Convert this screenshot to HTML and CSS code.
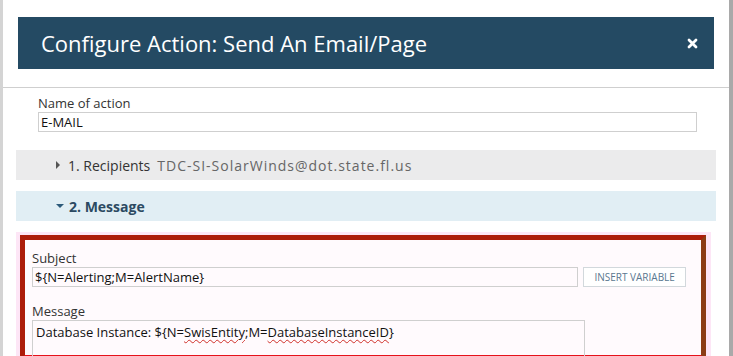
FILE: index.html
```html
<!DOCTYPE html>
<html lang="en">

<head>
    <meta charset="UTF-8" />
    <title>Configure Action</title>
    <link rel="stylesheet" href="styles.css">
</head>

<body>
    <div class="page">
        <div class="dialog-header">
            <h1>Configure Action: Send An Email/Page</h1>
            <svg class="close" width="11" height="11" viewBox="0 0 11 11">
                <path d="M2 2 L9 9 M9 2 L2 9" stroke="#fff" stroke-width="2.8" stroke-linecap="round" />
            </svg>
        </div>

        <div class="dialog-body">
            <div class="field name-field">
                <label>Name of action</label>
                <div class="input">E-MAIL</div>
            </div>

            <div class="section recipients">
                <span class="arrow-right"></span>
                <span class="section-title">1. Recipients</span>
                <span class="section-value">TDC-SI-SolarWinds@dot.state.fl.us</span>
            </div>

            <div class="section message">
                <span class="arrow-down"></span>
                <span class="section-title">2. Message</span>
            </div>

            <div class="highlight">
                <div class="red-box">
                    <label>Subject</label>
                    <div class="row">
                        <div class="input subject-input">${N=Alerting;M=AlertName}</div>
                        <button class="insert-btn">INSERT VARIABLE</button>
                    </div>
                    <label class="message-label">Message</label>
                    <div class="textarea">Database Instance: ${N=<span class="typo">SwisEntity</span>;M=<span class="typo">DatabaseInstanceID</span>}</div>
                </div>
            </div>
        </div>
    </div>
</body>

</html>
```

FILE: styles.css
```css
* {
    box-sizing: border-box;
}

body {
    margin: 0;
    font-family: 'Open Sans', sans-serif;
    color: #333;
    background: #ffffff;
    height: 356px;
    overflow: hidden;
}

.page {
    height: 356px;
    border-left: 3px solid #d4d4d4;
    border-right: 4px solid #a9a9a9;
    padding-top: 17px;
    overflow: hidden;
}

.dialog-header {
    margin: 0 15px 18px 15px;
    height: 52px;
    background-color: #244a63;
    display: flex;
    align-items: center;
    justify-content: space-between;
    padding: 0 16px 0 23px;
}

.dialog-header h1 {
    margin: 0;
    font-size: 22px;
    font-weight: 400;
    color: #ffffff;
}

.close {
    display: block;
}

.dialog-body {
    border-top: 1px solid #cfcfcf;
    padding: 6px 13px 0 13px;
}

label {
    display: block;
    font-size: 13px;
    line-height: 18px;
    color: #333;
}

.name-field {
    padding: 0 19px 0 22px;
    margin-bottom: 18px;
}

.input {
    height: 20px;
    border: 1px solid #cfcfcf;
    font-size: 13px;
    line-height: 18px;
    padding: 0 2px;
    color: #111;
}

.section {
    height: 30px;
    display: flex;
    align-items: center;
    padding-left: 40px;
    font-size: 14px;
    margin-bottom: 11px;
}

.recipients {
    background-color: #ebebec;
}

.recipients .section-title {
    color: #333;
    margin-right: 7px;
}

.section-value {
    color: #666;
    letter-spacing: 1px;
}

.arrow-right {
    width: 0;
    height: 0;
    border-top: 4px solid transparent;
    border-bottom: 4px solid transparent;
    border-left: 4px solid #555;
    margin-right: 8px;
}

.message {
    background-color: #e1eef4;
}

.message .section-title {
    color: #2c4a62;
    font-weight: 700;
}

.arrow-down {
    width: 0;
    height: 0;
    border-left: 4px solid transparent;
    border-right: 4px solid transparent;
    border-top: 4px solid #2c5a7a;
    margin-right: 5px;
}

.highlight {
    background-color: #fde6f6;
    margin-right: 5px;
    padding: 3px 5px 0 4px;
    height: 130px;
}

.red-box {
    height: 125px;
    background-color: #fffafd;
    border: 5px solid #ad1d0a;
    border-right-color: #8c3c14;
    border-bottom-color: #e5121b;
    padding: 9px 15px 0 7px;
}

.row {
    display: flex;
    align-items: center;
    gap: 5px;
}

.subject-input {
    width: 548px;
}

.insert-btn {
    height: 20px;
    width: 103px;
    border: 1px solid #d2d8dc;
    background: #ffffff;
    font-family: 'Open Sans', sans-serif;
    font-size: 10px;
    color: #5a7890;
    padding: 0;
}

.message-label {
    margin-top: 15px;
}

.textarea {
    width: 553px;
    height: 40px;
    border: 1px solid #cfcfcf;
    font-size: 13px;
    line-height: 22px;
    padding: 0 3px;
    color: #111;
}

.typo {
    text-decoration: underline wavy #d0302a;
    text-decoration-thickness: 1px;
    text-underline-offset: 2px;
}
```
